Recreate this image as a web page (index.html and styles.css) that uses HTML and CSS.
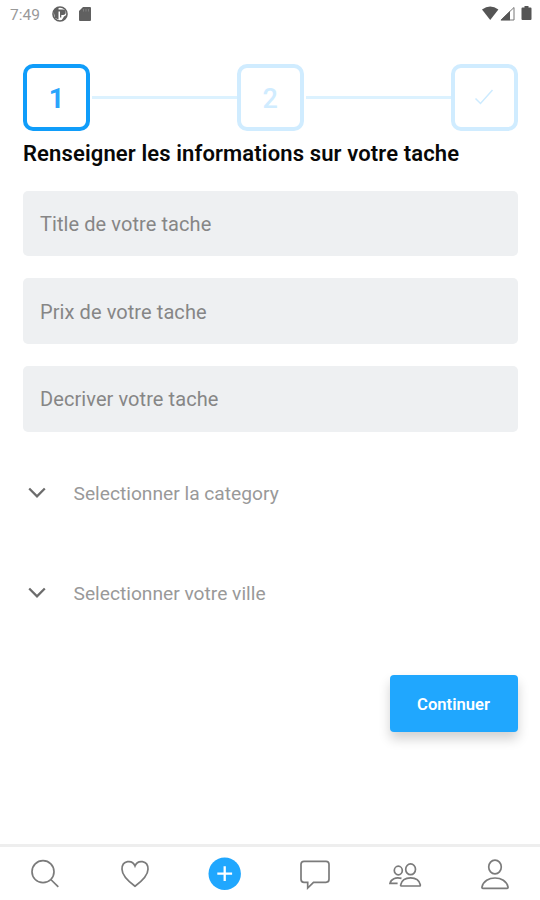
FILE: index.html
```
<!DOCTYPE html>
<html lang="fr">
<head>
<meta charset="utf-8">
<title>Nouvelle tache</title>
<link rel="stylesheet" href="styles.css">
</head>
<body>
<header class="status">
  <span class="time">7:49</span>
  <svg class="status-app" width="16" height="16" viewBox="0 0 16 16"><circle cx="8" cy="8" r="7" fill="none" stroke="#606060" stroke-width="1.6"/><path d="M1.500 5 4 2h2.500v11.500L3 12zM6 3.500h5a2.700 2.700 0 0 1 0 5.400H9.300v2.600H8V5.500H6z" fill="#606060"/><path d="M12 10.500 14.500 9 13 13l-3.500 1.800z" fill="#606060"/></svg>
  <svg class="status-card" width="12" height="14" viewBox="0 0 12 14"><path d="M4 0h7q1 0 1 1v12q0 1-1 1H1q-1 0-1-1V4z" fill="#606060"/><path d="M4.500 2v2.500M7 2v2.500M9.500 2v2.500" stroke="#888" stroke-width=".8"/></svg>
  <svg class="status-right" width="50" height="16" viewBox="0 0 50 16"><path d="M0 3.600Q8.200-2.400 16.400 3.600L8.200 14z" fill="#555"/><path d="M19 14 32 1.500V14z" fill="#fff" stroke="#777" stroke-width="1"/><path d="M18.500 14.300 28 5v9.300z" fill="#555"/><path d="M42.500 0h4v1.500h2q1 0 1 1V13q0 1-1 1h-8q-1 0-1-1V2.500q0-1 1-1h2z" fill="#555"/></svg>
</header>
<main class="content">
  <div class="stepper">
    <div class="step active">1</div>
    <div class="line"></div>
    <div class="step">2</div>
    <div class="line"></div>
    <div class="step"><svg width="20" height="18" viewBox="0 0 20 18"><path d="M1.500 10.500 6.500 15.500 18.500 2" fill="none" stroke="#cdebff" stroke-width="1.500"/></svg></div>
  </div>
  <h1 class="title">Renseigner les informations sur votre tache</h1>
  <div class="fields">
    <div class="field">Title de votre tache</div>
    <div class="field">Prix de votre tache</div>
    <div class="field">Decriver votre tache</div>
  </div>
  <div class="select"><svg width="18" height="12" viewBox="0 0 18 12"><path d="M1.200 1.500 9 9.300l7.800-7.800" fill="none" stroke="#6c6c6c" stroke-width="2.300"/></svg><span>Selectionner la category</span></div>
  <div class="select"><svg width="18" height="12" viewBox="0 0 18 12"><path d="M1.200 1.500 9 9.300l7.800-7.800" fill="none" stroke="#6c6c6c" stroke-width="2.300"/></svg><span>Selectionner votre ville</span></div>
  <button class="continue">Continuer</button>
</main>
<nav class="tabs">
  <a><svg width="34" height="34" viewBox="0 0 34 34"><circle cx="15" cy="14.700" r="11"/><path d="m22.800 22.500 7.500 7.300"/></svg></a>
  <a><svg width="34" height="34" viewBox="0 0 34 34"><path d="M17 29.200C10 24 4 18.500 4 12.200 4 2.800 14.500 2.500 17 9c2.500-6.500 13-6.200 13 3.200C30 18.500 24 24 17 29.200z"/></svg></a>
  <a><svg width="34" height="34" viewBox="0 0 34 34"><circle class="disc" cx="16.700" cy="16.700" r="16.200"/><path class="plus" d="M9.300 16.700h14.800M16.700 9.300v14.800"/></svg></a>
  <a><svg width="34" height="34" viewBox="0 0 34 34"><path d="M6 4.300h22q3 0 3 3v15q0 3-3 3H15.500L9.700 31v-5.700H6q-3 0-3-3v-15q0-3 3-3z"/></svg></a>
  <a><svg width="34" height="34" viewBox="0 0 34 34"><ellipse cx="10.300" cy="13.500" rx="4" ry="4.300"/><ellipse cx="22.600" cy="12.300" rx="4.900" ry="5.400"/><path d="M13.200 29h18.300q1 0 .8-1.200c-1-4.700-5-7-9.700-7s-8.900 2.300-9.900 7q-.3 1.200.5 1.200zM13.500 21.400c-6-1.500-10.600.6-11.500 5h7.600"/></svg></a>
  <a><svg width="34" height="34" viewBox="0 0 34 34"><ellipse cx="17" cy="10" rx="6.300" ry="6.900"/><path d="M5 31.400h24q1.300 0 1-1.400c-1.200-6-7-9-13-9S5.200 24 4 30q-.3 1.400 1 1.400z"/></svg></a>
</nav>
</body>
</html>
```

FILE: styles.css
```
* { box-sizing: border-box; }
body { margin: 0; width: 540px; height: 900px; display: flex; flex-direction: column; background: #fff; font-family: Roboto, "Liberation Sans", sans-serif; overflow: hidden; }
.status { height: 28px; display: flex; align-items: center; padding: 0 8px 0 10px; flex: none; }
.time { font-size: 15.500px; line-height: 30px; width: 42px; padding-top: 1px; color: #999; }
.status-card { margin-left: 11px; }
.status-right { margin: -1px 0 0 auto; }
.content { flex: 1; display: flex; flex-direction: column; padding: 36px 22.500px 0 23px; }
.stepper { display: flex; align-items: center; }
.step { width: 67px; height: 67px; border: 4px solid #d0ecff; border-radius: 10px; display: flex; align-items: center; justify-content: center; font-size: 27px; font-weight: 500; color: #d0ecff; padding-top: 2px; flex: none; }
.step svg { margin-top: -3px; }
.step.active { border-color: #109dfa; color: #2aa4fb; font-weight: 700; }
.line { flex: 1; height: 3px; background: #dcf2ff; margin-left: 2px; }
.title { margin: 9px 0 0; font-size: 22px; line-height: 28px; font-weight: 600; letter-spacing: .13px; color: #080808; white-space: nowrap; }
.fields { display: flex; flex-direction: column; gap: 22px; margin-top: 22.500px; }
.field { height: 65.700px; border-radius: 5px; background: #eef0f2; padding: 1.400px 17px 0; font-size: 20px; line-height: 65.700px; letter-spacing: .08px; color: #868686; }
.select { height: 100px; display: flex; align-items: center; font-size: 19.200px; color: #999; padding-left: 5px; gap: 27.500px; }
.select span { padding-top: 2px; }
.fields + .select { margin-top: 11px; }
.continue { align-self: flex-end; width: 128px; height: 57px; margin-top: 32.500px; padding: 2px 0 0; border: 0; border-radius: 4px; background: #20a7fe; box-shadow: 0 7px 12px rgba(0,0,0,.18); color: #fff; font: 600 16.600px Roboto, sans-serif; }
.tabs { height: 56px; border-top: 3px solid #eee; display: flex; flex: none; }
.tabs a { flex: 1; display: flex; align-items: center; justify-content: center; padding-top: 1px; }
.tabs svg { fill: none; stroke: #7b7b7b; stroke-width: 1.700; }
.tabs .disc { fill: #20a7fe; stroke: none; }
.tabs .plus { stroke: #fff; stroke-width: 2.300; }
```
